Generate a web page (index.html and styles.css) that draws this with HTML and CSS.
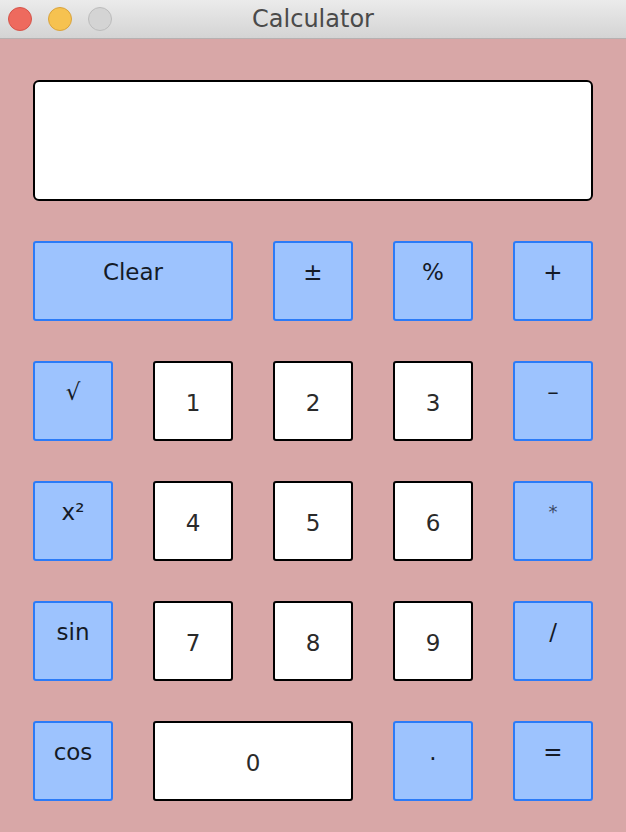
FILE: index.html
```html
<!DOCTYPE html>
<html>
<head>
<meta charset="utf-8">
<title>Calculator</title>
<link rel="stylesheet" href="styles.css">
</head>
<body>
<div class="window">
  <div class="titlebar">
    <div class="lights">
      <span class="light red"></span>
      <span class="light yellow"></span>
      <span class="light grey"></span>
    </div>
    <div class="title">Calculator</div>
    <div class="spacer"></div>
  </div>
  <div class="content">
    <div class="calc">
      <div class="display"></div>
      <button class="btn op wide">Clear</button>
      <button class="btn op">±</button>
      <button class="btn op">%</button>
      <button class="btn op">+</button>

      <button class="btn op">√</button>
      <button class="btn num">1</button>
      <button class="btn num">2</button>
      <button class="btn num">3</button>
      <button class="btn op">–</button>

      <button class="btn op">x²</button>
      <button class="btn num">4</button>
      <button class="btn num">5</button>
      <button class="btn num">6</button>
      <button class="btn op small">*</button>

      <button class="btn op">sin</button>
      <button class="btn num">7</button>
      <button class="btn num">8</button>
      <button class="btn num">9</button>
      <button class="btn op">/</button>

      <button class="btn op">cos</button>
      <button class="btn num wide">0</button>
      <button class="btn op">.</button>
      <button class="btn op">=</button>
    </div>
  </div>
</div>
</body>
</html>
```
FILE: styles.css
```css
html, body {
  margin: 0;
  padding: 0;
  background: #d8a7a7;
}
.window {
  width: 626px;
  height: 832px;
  display: flex;
  flex-direction: column;
  font-family: "DejaVu Sans", "Liberation Sans", sans-serif;
}
.titlebar {
  height: 38px;
  border-bottom: 1px solid #b6b1b1;
  background: linear-gradient(#ebebeb, #d4d4d4);
  display: grid;
  grid-template-columns: 1fr auto 1fr;
  align-items: center;
}
.lights {
  display: flex;
  gap: 16px;
  padding-left: 8px;
}
.light {
  width: 22px;
  height: 22px;
  border-radius: 50%;
  border: 1px solid;
}
.red { background: #ee6a5e; border-color: #d5544a; }
.yellow { background: #f6c250; border-color: #d9a33d; }
.grey { background: #d4d4d4; border-color: #bcbcbc; }
.title {
  font-size: 24px;
  line-height: 38px;
  color: #4a4a4a;
}
.content {
  padding: 41px 33px 0 33px;
}
.calc {
  display: grid;
  grid-template-columns: repeat(5, 80px);
  grid-template-rows: 121px repeat(5, 80px);
  gap: 40px;
}
.display {
  grid-column: 1 / span 5;
  box-sizing: border-box;
  background: #fff;
  border: 2px solid #000;
  border-radius: 6px;
}
.btn {
  box-sizing: border-box;
  margin: 0;
  width: 100%;
  height: 80px;
  border: 2px solid;
  border-radius: 3px;
  font-family: "DejaVu Sans", "Liberation Sans", sans-serif;
  font-size: 23px;
  line-height: 23px;
  display: flex;
  justify-content: center;
  align-items: flex-start;
}
.btn.wide { grid-column: span 2; }
.op {
  background: #9dc3fe;
  border-color: #2c7bf7;
  color: #141a26;
  padding: 18px 0 0 0;
}
.op.small {
  font-size: 18px;
  padding-top: 17px;
  color: #3b4a66;
}
.num {
  background: #fff;
  border-color: #000;
  color: #2a2a2a;
  padding: 29px 0 0 0;
}
```
